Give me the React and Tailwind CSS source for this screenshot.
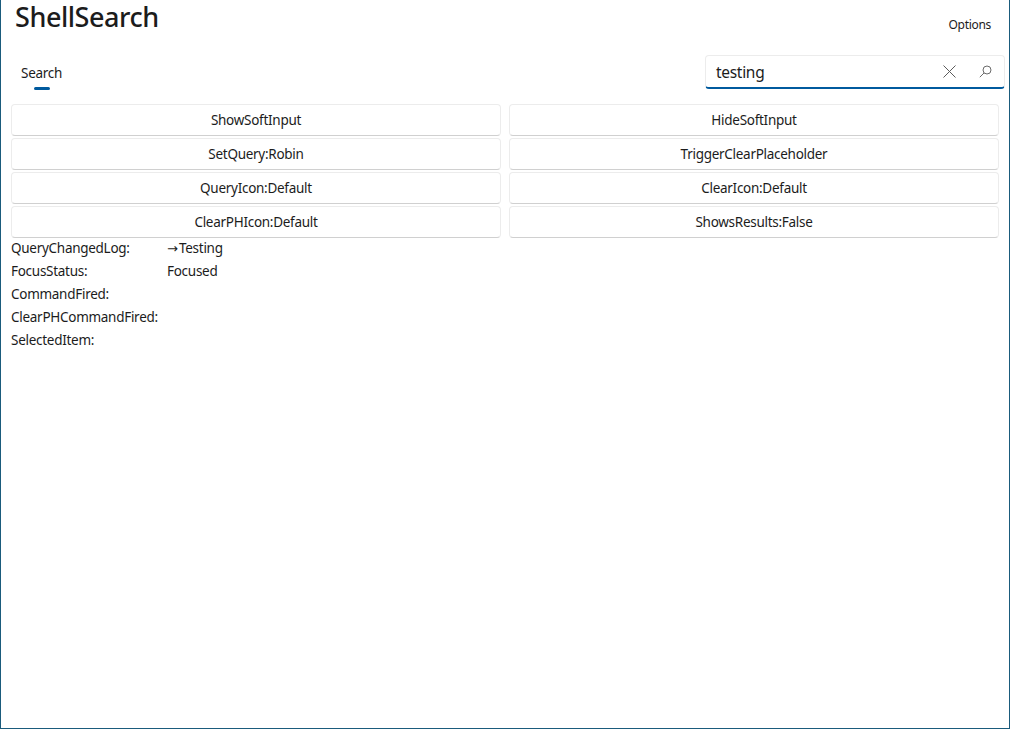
const buttons = [
  "ShowSoftInput",
  "HideSoftInput",
  "SetQuery:Robin",
  "TriggerClearPlaceholder",
  "QueryIcon:Default",
  "ClearIcon:Default",
  "ClearPHIcon:Default",
  "ShowsResults:False",
];

const logRows = [
  ["QueryChangedLog:", "Testing", true],
  ["FocusStatus:", "Focused"],
  ["CommandFired:", ""],
  ["ClearPHCommandFired:", ""],
  ["SelectedItem:", ""],
];

const App = () => {
  return (
    <div
      className="w-[1010px] h-[729px] overflow-hidden bg-white border-x border-b border-[#1a5b7c] text-[13.5px] text-[#1c1c1c]"
      style={{ fontFamily: '"Noto Sans", "Open Sans", sans-serif' }}
    >
      {/* Title bar */}
      <div className="flex justify-between items-start h-[55px] pl-[14px] pr-[18px]">
        <h1 className="text-[27px] leading-[33px] font-medium tracking-[-0.45px]">ShellSearch</h1>
        <button className="text-[12px] leading-[16px] mt-[17px] tracking-[-0.3px]">Options</button>
      </div>

      {/* Nav row */}
      <div className="flex justify-between items-start h-[49px] pl-[20px] pr-[4px]">
        <div className="flex flex-col items-center mt-[9px]">
          <span className="leading-[19px] tracking-[-0.28px]">Search</span>
          <div className="w-4 h-[3px] mt-[4px] rounded-full bg-[#005a9e]" />
        </div>
        <div className="flex items-center w-[300px] h-[34px] pl-[10px] pr-[12px] bg-white border border-[#ececec] border-b-2 border-b-[#005a9e] rounded-[4px]">
          <span className="flex-1 mt-[2px] text-[15.5px] tracking-[-0.3px]">testing</span>
          <svg className="w-[13px] h-[13px] mr-[23px] text-[#5c5c5c]" viewBox="0 0 13 13" fill="none" stroke="currentColor" strokeWidth="1">
            <path d="M0.5 0.5L12.5 12.5M12.5 0.5L0.5 12.5" />
          </svg>
          <svg className="w-[13px] h-[13px] text-[#6b6b6b]" viewBox="0 0 13 13" fill="none" stroke="currentColor" strokeWidth="1">
            <circle cx="8" cy="5" r="4" />
            <path d="M5 8L0.8 12.2" />
          </svg>
        </div>
      </div>

      {/* Buttons */}
      <div className="grid grid-cols-[490px_490px] gap-x-[8px] gap-y-[2px] pl-[10px]">
        {buttons.map((label) => (
          <button
            key={label}
            className="h-[32px] bg-white border border-[#ececec] border-b-[#d0d0d0] rounded-[4px] leading-[30px] tracking-[-0.28px] text-center"
          >
            {label}
          </button>
        ))}
      </div>

      {/* Log */}
      <div className="flex flex-col gap-[4px] mt-[1px] pl-[10px]">
        {logRows.map(([label, value, arrow]) => (
          <div key={label} className="flex h-[19px] leading-[19px] tracking-[-0.28px]">
            <span className="w-[156px]">{label}</span>
            <span>
              {arrow && <span className="inline-block w-[12px] text-[13px] tracking-normal" style={{ fontFamily: '"DejaVu Sans", sans-serif' }}>→</span>}
              {value}
            </span>
          </div>
        ))}
      </div>
    </div>
  );
};

export default App;
